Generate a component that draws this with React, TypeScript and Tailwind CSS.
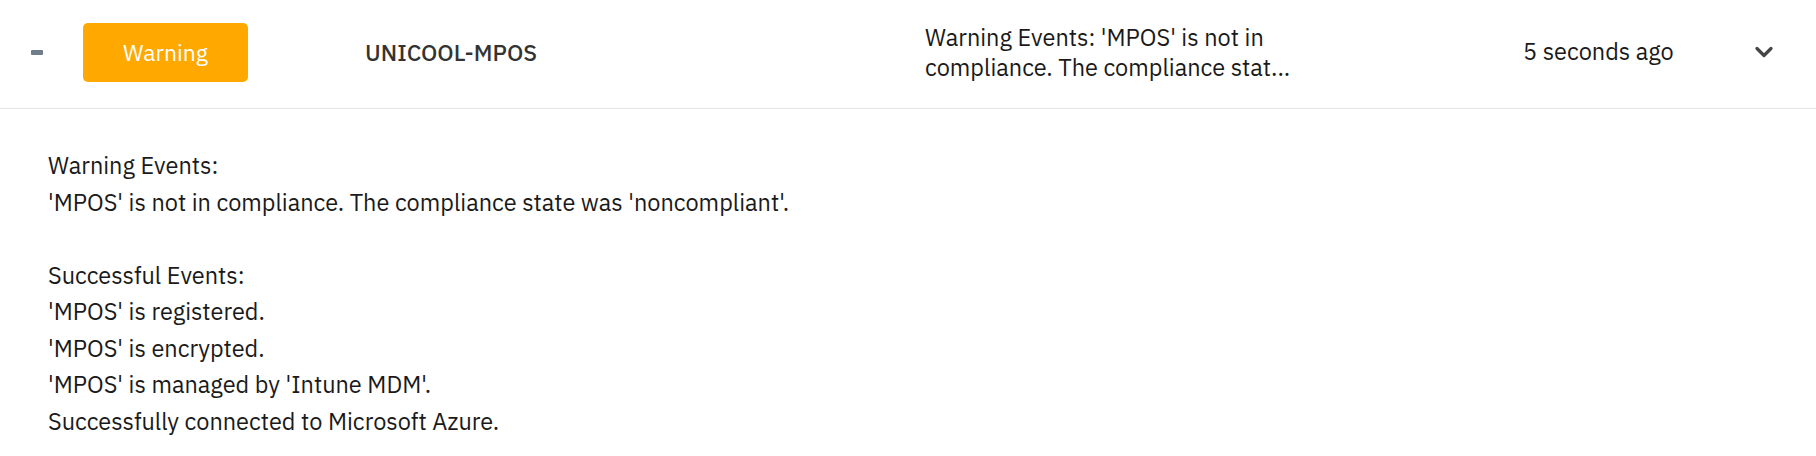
import React from "react";

const details = [
  "Warning Events:",
  "'MPOS' is not in compliance. The compliance state was 'noncompliant'.",
  "",
  "Successful Events:",
  "'MPOS' is registered.",
  "'MPOS' is encrypted.",
  "'MPOS' is managed by 'Intune MDM'.",
  "Successfully connected to Microsoft Azure.",
];

function Chevron() {
  return (
    <svg width="20" height="14" viewBox="0 0 20 14" fill="none">
      <path
        d="M3 3.5 L10 10.5 L17 3.5"
        stroke="#454545"
        strokeWidth="3.2"
        strokeLinecap="round"
        strokeLinejoin="round"
      />
    </svg>
  );
}

export default function App() {
  return (
    <div
      className="w-full bg-white text-[#1a1a1a]"
      style={{ fontFamily: '"IBM Plex Sans", "Liberation Sans", Arial, sans-serif' }}
    >
      <div className="flex items-center h-[109px] pb-[4px] border-b border-[#e6e6e6]">
        <div className="w-[83px] pl-[31px] flex items-center">
          <div className="w-[12px] h-[5px] rounded-[1px] bg-[#6f7c89]" />
        </div>
        <div className="w-[282px]">
          <div className="w-[165px] h-[59px] rounded-[5px] bg-[#ffa800] flex items-center justify-center text-white text-[23px]">
            Warning
          </div>
        </div>
        <div className="w-[560px] text-[23px] font-medium text-[#333]">
          UNICOOL-MPOS
        </div>
        <div className="w-[598px]">
          <p className="w-[390px] text-[23.5px] leading-[30px]">
            Warning Events: 'MPOS' is not in
            <br />
            compliance. The compliance stat...
          </p>
        </div>
        <div className="w-[231px] text-[23.5px]">5 seconds ago</div>
        <div className="w-[20px] flex items-center">
          <Chevron />
        </div>
      </div>
      <div className="pl-[48px] pt-[38px] pb-[20px] text-[23.5px] leading-[36.5px]">
        {details.map((line, i) => (
          <div key={i} className="h-[36.5px] whitespace-nowrap">
            {line}
          </div>
        ))}
      </div>
    </div>
  );
}
